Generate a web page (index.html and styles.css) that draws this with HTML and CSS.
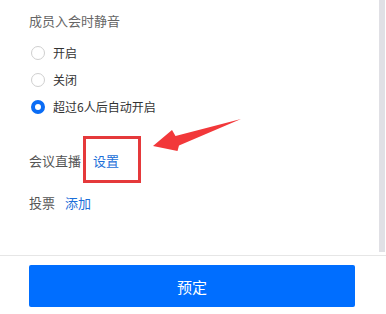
FILE: index.html
```html
<!DOCTYPE html>
<html lang="zh-CN">
<head>
    <meta charset="UTF-8">
    <meta name="viewport" content="width=device-width, initial-scale=1.0">
    <title>预定会议</title>
    <link rel="stylesheet" href="styles.css">
</head>
<body>
    <div class="panel">
        <div class="content">
            <div class="section-title">成员入会时静音</div>

            <div class="radio-list">
                <div class="radio-row"><span class="radio"></span>开启</div>
                <div class="radio-row"><span class="radio"></span>关闭</div>
                <div class="radio-row"><span class="radio checked"></span>超过6人后自动开启</div>
            </div>

            <div class="setting live">
                <span class="label">会议直播</span>
                <a class="link" href="#">设置</a>
            </div>

            <div class="setting vote">
                <span class="label">投票</span>
                <a class="link" href="#">添加</a>
            </div>

            <!-- annotation on top of the screenshot -->
            <div class="mark-box"></div>
            <svg class="mark-arrow" width="100" height="40" viewBox="145 115 100 40">
                <polygon points="153,146 172,130 175.5,136 241,119 179,145.5 177.5,151" fill="#f2383a"/>
            </svg>
        </div>
        <div class="scrollbar"></div>
    </div>

    <div class="footer">
        <button class="btn-primary">预定</button>
    </div>
</body>
</html>
```

FILE: styles.css
```css
body {
    margin: 0;
    font-family: "Noto Sans CJK SC", "Noto Sans", sans-serif;
    background-color: #fff;
    color: #333;
}
.panel {
    display: flex;
    height: 255px;
    border-bottom: 1px solid #e6e6e6;
}
.content {
    position: relative;
    flex: 1;
    padding: 11px 0 0 29px;
}
.scrollbar {
    width: 6px;
    margin-right: 1px;
    height: 252px;
    background-color: #e0e0e5;
}
.section-title {
    font-size: 13px;
    line-height: 20px;
    color: #666;
}
.radio-list {
    margin-top: 8px;
}
.radio-row {
    display: flex;
    align-items: center;
    height: 27px;
    font-size: 12px;
    color: #333;
}
.radio {
    box-sizing: border-box;
    width: 14px;
    height: 14px;
    margin: 0 8px 0 2px;
    border: 1px solid #cfcfcf;
    border-radius: 50%;
    background-color: #fff;
}
.radio.checked {
    border: 4px solid #0a6cf5;
}
.setting {
    display: flex;
    font-size: 13px;
    line-height: 20px;
}
.live {
    margin-top: 31px;
}
.vote {
    margin-top: 22px;
}
.label {
    color: #555;
    margin-right: 10px;
}
.live .label {
    margin-right: 12px;
}
.link {
    color: #1c6fd9;
    text-decoration: none;
}
.mark-box {
    position: absolute;
    left: 83px;
    top: 136px;
    width: 52px;
    height: 41px;
    border: 3px solid #e5393b;
}
.mark-arrow {
    position: absolute;
    left: 145px;
    top: 115px;
}
.footer {
    padding: 9px 0 0 29px;
}
.btn-primary {
    display: block;
    width: 326px;
    height: 42px;
    border: none;
    border-radius: 2px;
    background-color: #006eff;
    color: #fff;
    font-family: inherit;
    font-size: 15px;
}
```
